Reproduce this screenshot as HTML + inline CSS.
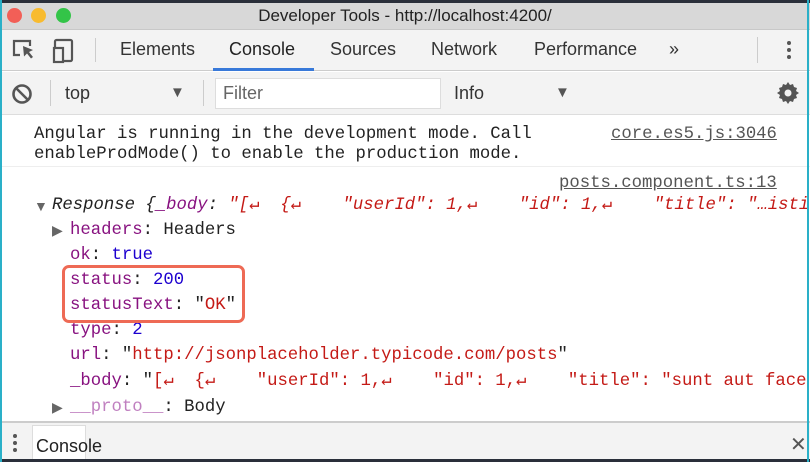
<!DOCTYPE html>
<html><head><meta charset="utf-8"><style>
*{margin:0;padding:0;box-sizing:border-box}
body{width:810px;height:462px;overflow:hidden;background:#fff;position:relative;font-family:"Liberation Sans",sans-serif}
.a{position:absolute}
.m{font-family:"Liberation Mono",monospace;font-size:17.3px;white-space:pre;line-height:20px;color:#222}
.p{color:#881280}.s{color:#c41a16}.n{color:#1c00cf}.i{font-style:italic}
.u{text-decoration:underline;color:#555}
.tab{font-size:18px;color:#333;top:39px}
.t{font-size:14px;color:#666}
</style></head><body>
<div class="a" style="left:0;top:0;width:810px;height:3px;background:#2a2f3a"></div>
<div class="a" style="left:0;top:3px;width:810px;height:27px;background:#d8d8d8;border-bottom:1px solid #c8c8c8"></div>
<div class="a" style="left:7px;top:8px;width:15px;height:15px;border-radius:50%;background:#f25f57"></div>
<div class="a" style="left:31px;top:8px;width:15px;height:15px;border-radius:50%;background:#f8bb2f"></div>
<div class="a" style="left:56px;top:8px;width:15px;height:15px;border-radius:50%;background:#33c448"></div>
<div class="a" style="left:0;top:6px;width:810px;text-align:center;font-size:17px;color:#222">Developer Tools - http://localhost:4200/</div>
<div class="a" style="left:0;top:30px;width:810px;height:41px;background:#f3f3f3;border-bottom:1px solid #ccc"></div>
<svg class="a" style="left:10px;top:37px" width="70" height="28"><path d="M10 18H4V4h16v5" fill="none" stroke="#555" stroke-width="2.2"/><path d="M13 9l10 4-4 2 4 5-2 1.5-4-5-3 3z" fill="#555"/><rect x="45" y="3" width="17" height="21" rx="1.5" fill="none" stroke="#555" stroke-width="2.2"/><rect x="44" y="11" width="9" height="14" fill="#f3f3f3" stroke="#555" stroke-width="2.2"/></svg>
<div class="a" style="left:95px;top:38px;width:1px;height:24px;background:#ccc"></div>
<div class="a tab" style="left:120px">Elements</div>
<div class="a tab" style="left:229px;color:#222">Console</div>
<div class="a" style="left:213px;top:68px;width:101px;height:3px;background:#3879d9"></div>
<div class="a tab" style="left:330px">Sources</div>
<div class="a tab" style="left:431px">Network</div>
<div class="a tab" style="left:534px">Performance</div>
<div class="a tab" style="left:669px">»</div>
<div class="a" style="left:757px;top:37px;width:1px;height:26px;background:#ccc"></div>
<div class="a" style="left:787px;top:41px;width:4px;height:4px;border-radius:50%;background:#555;box-shadow:0 7px #555,0 14px #555"></div>
<div class="a" style="left:0;top:72px;width:810px;height:43px;background:#f3f3f3;border-bottom:1px solid #ddd"></div>
<svg class="a" style="left:11px;top:83px" width="22" height="22"><circle cx="11" cy="11" r="8.5" fill="none" stroke="#555" stroke-width="2.6"/><path d="M5 5l12 12" stroke="#555" stroke-width="2.6"/></svg>
<div class="a" style="left:50px;top:80px;width:1px;height:26px;background:#ccc"></div>
<div class="a" style="left:65px;top:83px;font-size:18px;color:#333">top</div>
<div class="a" style="left:170px;top:84px;font-size:15px;color:#555">▼</div>
<div class="a" style="left:203px;top:80px;width:1px;height:26px;background:#ccc"></div>
<div class="a" style="left:215px;top:78px;width:226px;height:31px;background:#fff;border:1px solid #ddd"></div>
<div class="a" style="left:223px;top:83px;font-size:18px;color:#666">Filter</div>
<div class="a" style="left:454px;top:83px;font-size:18px;color:#333">Info</div>
<div class="a" style="left:555px;top:84px;font-size:15px;color:#555">▼</div>
<svg class="a" style="left:776px;top:81px" width="24" height="24" viewBox="0 0 24 24"><path d="M12 1l2 3 3-1 1 3 3 1-1 3 3 2-3 2 1 3-3 1-1 3-3-1-2 3-2-3-3 1-1-3-3-1 1-3-3-2 3-2-1-3 3-1 1-3 3 1z" fill="#555"/><circle cx="12" cy="12" r="3.5" fill="#f3f3f3"/></svg>
<div class="a m" style="left:34px;top:125px">Angular is running in the development mode. Call
enableProdMode() to enable the production mode.</div>
<div class="a m u" style="left:611px;top:125px">core.es5.js:3046</div>
<div class="a" style="left:0;top:166px;width:810px;height:1px;background:#eee"></div>
<div class="a m u" style="left:559px;top:174px">posts.component.ts:13</div>
<div class="a t" style="left:34px;top:198px">▼</div>
<div class="a m i" style="left:52px;top:196px">Response {<span class="p">_body</span>: <span class="s">"[↵  {↵    "userId": 1,↵    "id": 1,↵    "title": "…isti</span></div>
<div class="a t" style="left:52px;top:222px">▶</div>
<div class="a m" style="left:70px;top:221px"><span class="p">headers</span>: Headers</div>
<div class="a m" style="left:70px;top:246px"><span class="p">ok</span>: <span class="n">true</span></div>
<div class="a m" style="left:70px;top:271px"><span class="p">status</span>: <span class="n">200</span></div>
<div class="a m" style="left:70px;top:296px"><span class="p">statusText</span>: "<span class="s">OK</span>"</div>
<div class="a m" style="left:70px;top:321px"><span class="p">type</span>: <span class="n">2</span></div>
<div class="a m" style="left:70px;top:346px"><span class="p">url</span>: "<span class="s">http://jsonplaceholder.typicode.com/posts</span>"</div>
<div class="a m" style="left:70px;top:372px"><span class="p">_body</span>: "<span class="s">[↵  {↵    "userId": 1,↵    "id": 1,↵    "title": "sunt aut face</span></div>
<div class="a t" style="left:52px;top:399px">▶</div>
<div class="a m" style="left:70px;top:398px"><span style="color:#c080c0">__proto__</span>: Body</div>
<div class="a" style="left:62px;top:265px;width:183px;height:58px;border:3px solid #ee6a55;border-radius:7px"></div>
<div class="a" style="left:0;top:421px;width:810px;height:38px;background:#f3f3f3;border-top:2px solid #ccc"></div>
<div class="a" style="left:13px;top:434px;width:4px;height:4px;border-radius:50%;background:#555;box-shadow:0 7px #555,0 14px #555"></div>
<div class="a" style="left:32px;top:425px;width:54px;height:34px;background:#fff;border:1px solid #ddd;border-bottom:none"></div>
<div class="a" style="left:36px;top:436px;font-size:18px;color:#222">Console</div>
<div class="a" style="left:790px;top:432px;font-size:20px;color:#555">✕</div>
<div class="a" style="left:0;top:459px;width:810px;height:3px;background:#2a2f3a"></div>
<div class="a" style="left:0;top:0;width:2px;height:462px;background:#2ab0c8"></div>
<div class="a" style="left:807px;top:0;width:2px;height:462px;background:#2ab0c8"></div>
</body></html>
